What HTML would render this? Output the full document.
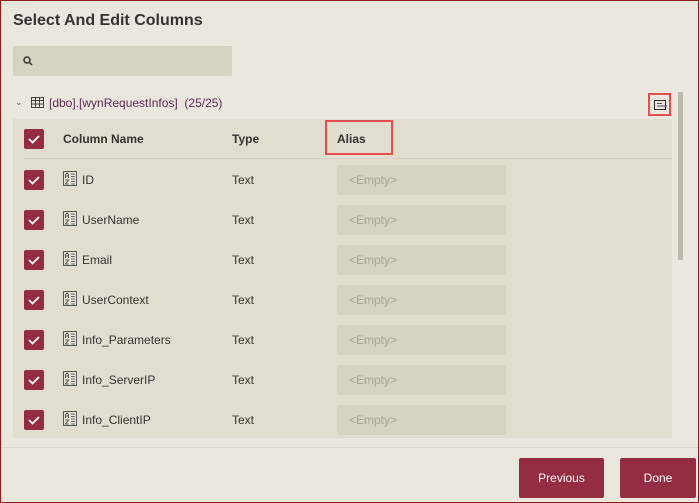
<!DOCTYPE html><html><head><style>
body{margin:0;width:699px;height:503px;overflow:hidden;background:#eae7df;font-family:"Liberation Sans",sans-serif;position:relative;}
.frame{position:absolute;left:0;top:0;width:697px;height:501px;border:1px solid #8b1a1a;}
.a{position:absolute}
.cb{position:absolute;left:24px;width:20px;height:20px;background:#942d42;border-radius:2px}
.cb svg{position:absolute;left:3px;top:3px}
.t{position:absolute;font-size:12px;color:#333}
.in{position:absolute;left:337px;width:169px;height:30px;background:#d6d3c1;border-radius:2px;color:#a8a597;font-size:12px;line-height:30px;text-indent:12px}
.ic{position:absolute;left:63px}
</style></head><body><div class="frame"></div>
<div class="a" style="left:13px;top:12px;font-size:16px;font-weight:bold;color:#333">Select And Edit Columns</div>
<div class="a" style="left:13px;top:46px;width:219px;height:30px;background:#d6d3c1;border-radius:2px"></div>
<svg class="a" style="left:23px;top:56px" width="10" height="10"><circle cx="4" cy="4" r="3" fill="none" stroke="#333" stroke-width="1.5"/><line x1="6" y1="6" x2="9" y2="9" stroke="#333" stroke-width="1.5"/></svg>
<div class="a" style="left:15px;top:97px;font-size:9px;color:#555">&#8964;</div>
<svg class="a" style="left:31px;top:97px" width="13" height="11"><rect x="0.5" y="0.5" width="12" height="10" fill="none" stroke="#444"/><line x1="0" y1="3.5" x2="13" y2="3.5" stroke="#444"/><line x1="0" y1="7" x2="13" y2="7" stroke="#444"/><line x1="4.5" y1="0" x2="4.5" y2="11" stroke="#444"/><line x1="8.5" y1="0" x2="8.5" y2="11" stroke="#444"/></svg>
<div class="t" style="left:49px;top:96px;color:#5a2a52">[dbo].[wynRequestInfos] &nbsp;(25/25)</div>
<div class="a" style="left:648px;top:93px;width:23px;height:23px;border:2px solid #e84c4c;box-sizing:border-box"></div>
<svg class="a" style="left:654px;top:100px" width="13" height="10"><rect x="0.5" y="0.5" width="11" height="9" fill="none" stroke="#333"/><line x1="3" y1="3.5" x2="8" y2="3.5" stroke="#555"/><line x1="3" y1="6" x2="13" y2="6" stroke="#446"/></svg>
<div class="a" style="left:13px;top:119px;width:659px;height:319px;background:#e1ded0"></div>
<div class="a" style="left:678px;top:92px;width:5px;height:168px;background:#bcb8ae"></div>
<div class="a" style="left:24px;top:158px;width:648px;height:1px;background:#d4d1c3"></div>
<div class="cb" style="top:129px"><svg width="14" height="14"><path d="M2 7l3.5 3.5L12 4" fill="none" stroke="#fff" stroke-width="1.8"/></svg></div>
<div class="t" style="left:63px;top:132px;font-weight:bold">Column Name</div>
<div class="t" style="left:232px;top:132px;font-weight:bold">Type</div>
<div class="a" style="left:325px;top:120px;width:68px;height:35px;border:2px solid #e84c4c;box-sizing:border-box"></div>
<div class="t" style="left:337px;top:132px;font-weight:bold">Alias</div>
<div id="rows"></div>
<script>
var n=["ID","UserName","Email","UserContext","Info_Parameters","Info_ServerIP","Info_ClientIP"],h="";
var ic='<svg width="14" height="15"><rect x="0.5" y="0.5" width="13" height="14" fill="#e6e3d6" stroke="#555"/><path d="M2.5 7V3.5L4 2l1.5 1.5V7M2.5 5h3M2.5 9h3L2.5 13h3" fill="none" stroke="#555"/><path d="M8 3h4M8 5.5h4M8 8h4M8 10.5h4M8 13h4" stroke="#666"/></svg>';
n.forEach(function(s,i){var c=180+40*i;
h+='<div class="cb" style="top:'+(c-10)+'px"><svg width="14" height="14"><path d="M2 7l3.5 3.5L12 4" fill="none" stroke="#fff" stroke-width="1.8"/></svg></div>';
h+='<div class="ic" style="top:'+(c-9)+'px">'+ic+'</div>';
h+='<div class="t" style="left:82px;top:'+(c-7)+'px">'+s+'</div>';
h+='<div class="t" style="left:232px;top:'+(c-7)+'px">Text</div>';
h+='<div class="in" style="top:'+(c-15)+'px">&lt;Empty&gt;</div>';});
document.getElementById("rows").innerHTML=h;
</script>
<div class="a" style="left:1px;top:447px;width:697px;height:1px;background:#d8d5c9"></div>
<div class="a" style="left:519px;top:458px;width:85px;height:40px;background:#942d42;border-radius:2px;color:#fff;font-size:12px;line-height:40px;text-align:center">Previous</div>
<div class="a" style="left:620px;top:458px;width:76px;height:40px;background:#942d42;border-radius:2px;color:#fff;font-size:12px;line-height:40px;text-align:center">Done</div>
</body></html>
